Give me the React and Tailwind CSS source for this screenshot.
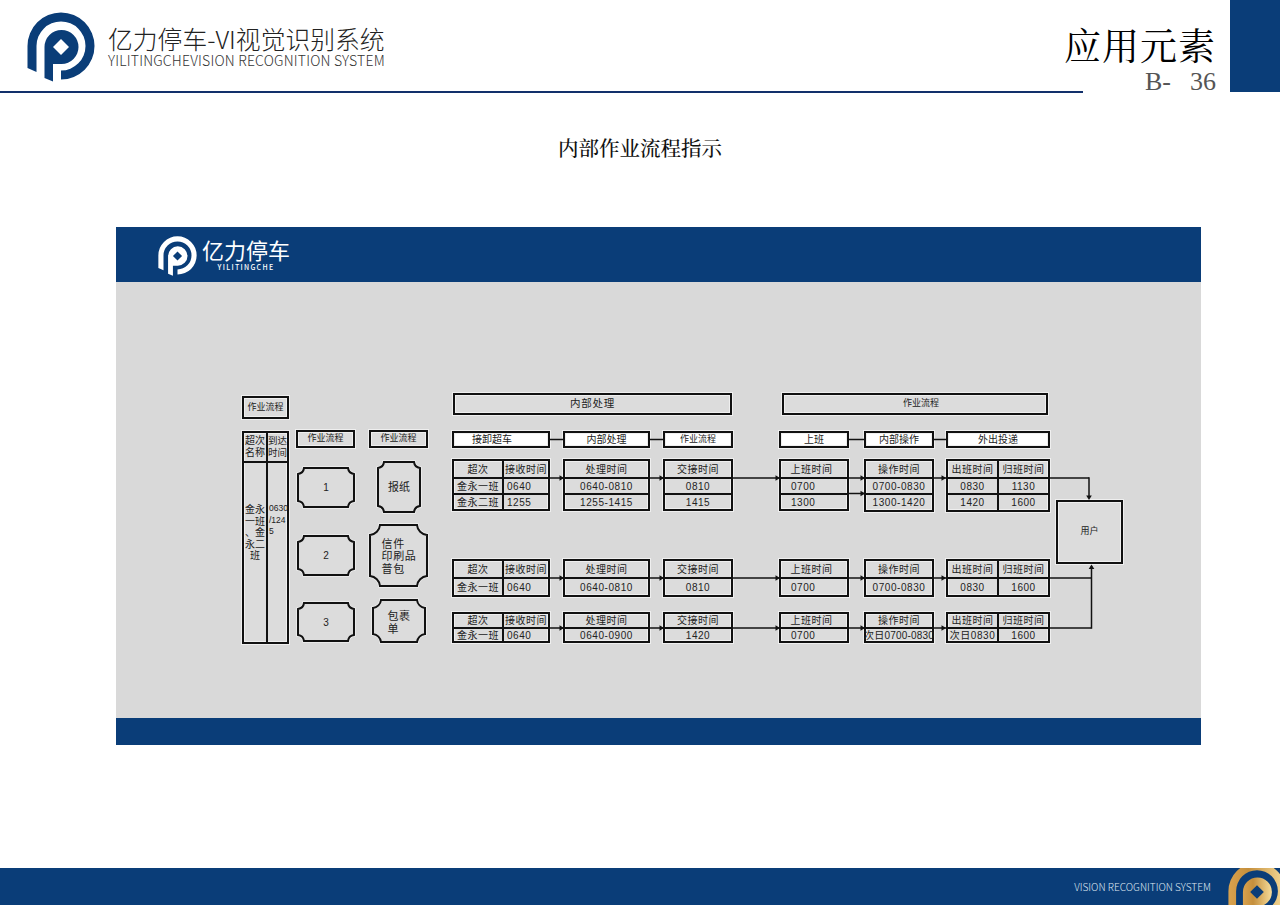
import React from "react";

const CJK = "font-['Noto_Sans_CJK_SC','Noto_Sans',sans-serif]";
const SERIF = "font-['Noto_Serif_CJK_SC','Noto_Sans_CJK_SC',serif]";
const DIA = "font-['Liberation_Sans','Noto_Sans_CJK_SC',sans-serif]";
const FRAME = "box-border border-2 border-[#111] shadow-[0_0_0_1px_#efefef,inset_0_0_0_1px_#efefef]";
const TRACKS = "grid items-start grid-cols-[98px_13px_87px_13px_70px_46px_70px_15px_70px_12px_104px]";
const STARTS = ["col-start-1", "col-start-3", "col-start-5", "col-start-7", "col-start-9", "col-start-11"];

const A = "w-[98px] grid-cols-[48px_46px]";
const B = "w-[87px] grid-cols-[83px]";
const C = "w-[70px] grid-cols-[66px]";
const D = "w-[104px] grid-cols-[49px_51px]";
const R1 = "grid-rows-[16px_16px_16px]";
const R1B = "grid-rows-[16px_16px_17px]";
const R2 = "grid-rows-[16px_18px]";
const R3 = "grid-rows-[13px_14px]";
const INSET_A = "pl-[3px] justify-start";
const INSET_S = "pl-[10px] justify-start";

function Logo({ fg = "#0a3d78", hole = "#fff", className, children }) {
  return (
    <svg viewBox="0 0 68 70" className={className}>
      {children}
      <path fill={fg} d="M0.5 56 L0.5 34 A33.5 33.5 0 1 1 34 67.5 L34 58.5 A24.5 24.5 0 1 0 9.5 34 L9.5 60 Z" />
      <path fill={fg} d="M17.5 66 L17.5 35 A17 17 0 1 1 34.5 52 L26 52 L26 69.5 Z" />
      <path fill={hole} d="M34 27 L42 35 L34 43 L26 35 Z" />
    </svg>
  );
}

function Box({ white, children, cls = "" }) {
  return (
    <div className={`${FRAME} flex items-center justify-center text-[#222] whitespace-nowrap ${white ? "bg-white" : "bg-[#dcdcdc]"} ${cls}`}>
      {children}
    </div>
  );
}

function Table({ cls, rows, insetCol = -1, inset = "", headCls = "" }) {
  return (
    <div className={`${FRAME} grid bg-[#dcdcdc] text-[10px] tracking-[0.55px] text-[#222] ${cls}`}>
      {rows.flatMap((r, i) =>
        r.map((c, j) => (
          <div
            key={i + "-" + j}
            className={`flex items-center whitespace-nowrap ${i && j === insetCol ? inset : "justify-center"} ${i === 0 ? headCls : ""} ${i ? "border-t-2 border-[#111]" : ""} ${j ? "border-l-2 border-[#111]" : ""}`}
          >
            {c}
          </div>
        ))
      )}
    </div>
  );
}

function Notch({ w, h, r = 7, size, children, cls = "" }) {
  const d = `M${r} 1 H${w - r} A${r} ${r} 0 0 0 ${w - 1} ${r} V${h - r} A${r} ${r} 0 0 0 ${w - r} ${h - 1} H${r} A${r} ${r} 0 0 0 1 ${h - r} V${r} A${r} ${r} 0 0 0 ${r} 1 Z`;
  return (
    <div className={`relative flex items-center justify-center text-[#222] ${size}`}>
      <svg className="absolute inset-0 overflow-visible" width={w} height={h}>
        <path d={d} fill="#dcdcdc" stroke="#efefef" strokeWidth="3.5" />
        <path d={d} fill="#dcdcdc" stroke="#111" strokeWidth="2" />
      </svg>
      <div className={`relative ${cls}`}>{children}</div>
    </div>
  );
}

function Row({ cls = "", children }) {
  return (
    <div className={`${TRACKS} ${cls}`}>
      {React.Children.map(children, (c, i) => (
        <div className={STARTS[i]}>{c}</div>
      ))}
    </div>
  );
}

function Connectors() {
  const L = (x1, y1, x2, y2) => <line x1={x1} y1={y1} x2={x2} y2={y2} stroke="#111" strokeWidth="1.5" />;
  const Ar = (x, y) => <path d={`M${x} ${y} l-4.5 -2.8 v5.6 Z`} fill="#111" />;
  const Dn = (x, y) => <path d={`M${x} ${y} l-2.8 -4.5 h5.6 Z`} fill="#111" />;
  const Up = (x, y) => <path d={`M${x} ${y} l-2.8 4.5 h5.6 Z`} fill="#111" />;
  return (
    <svg className="absolute inset-0 pointer-events-none" width="1085" height="436" viewBox="116 282 1085 436">
      {L(550, 439.5, 563, 439.5)}
      {L(650, 439.5, 663, 439.5)}
      {L(849, 439.5, 864, 439.5)}
      {L(934, 439.5, 946, 439.5)}
      {L(550, 478, 1089, 478)}
      {L(1089, 477.3, 1089, 498)}
      {Dn(1089, 500)}
      {L(849, 493.5, 864, 493.5)}
      {L(550, 578, 1091.5, 578)}
      {L(550, 628, 1091.5, 628)}
      {L(1091.5, 628.7, 1091.5, 566)}
      {Up(1091.5, 564.5)}
      {[564, 664, 780, 865, 946].map((x) => (
        <g key={x}>
          {Ar(x, 478)}
          {Ar(x, 578)}
          {Ar(x, 628)}
        </g>
      ))}
      {Ar(865, 493.5)}
    </svg>
  );
}

function Diagram() {
  return (
    <div className={`relative flex-1 flex items-start bg-[#d9d9d9] pl-[126px] pt-[111px] ${DIA}`}>
      {/* first column */}
      <div className="w-[47px] mt-[3px] flex flex-col gap-[12px]">
        <Box cls="w-[47px] h-[23px] text-[9px]">作业流程</Box>
        <div className={`${FRAME} h-[213px] grid grid-cols-[22px_21px] grid-rows-[30px_1fr] bg-[#dcdcdc] text-[10px] text-[#222]`}>
          <div className="flex items-center justify-center text-center leading-[12px] border-b-2 border-[#111]">超次<br />名称</div>
          <div className="flex items-center justify-center text-center text-[9.5px] leading-[12px] border-b-2 border-l-2 border-[#111]">到达<br />时间</div>
          <div className="pt-[41px] text-center leading-[11.5px]">金永<br />一班<br />、金<br />永二<br />班</div>
          <div className="border-l-2 border-[#111] pt-[40px] pl-[1px] text-[8.5px] leading-[11.5px]">0630<br />/124<br />5</div>
        </div>
      </div>

      {/* second column */}
      <div className="ml-[7px] mt-[37px] flex flex-col items-start">
        <Box cls="w-[59px] h-[18px] text-[9px]">作业流程</Box>
        <Notch w={58} h={41} size="w-[58px] h-[41px] ml-[1px] mt-[19px]" cls="text-[10px]">1</Notch>
        <Notch w={58} h={41} size="w-[58px] h-[41px] ml-[1px] mt-[27px]" cls="text-[10px]">2</Notch>
        <Notch w={58} h={40} size="w-[58px] h-[40px] ml-[1px] mt-[26px]" cls="text-[10px]">3</Notch>
      </div>

      {/* third column */}
      <div className="ml-[14px] mt-[37px] flex flex-col items-start">
        <Box cls="w-[59px] h-[18px] text-[9px]">作业流程</Box>
        <Notch w={44} h={52} size="w-[44px] h-[52px] ml-[8px] mt-[13px]" cls="text-[11px]">报纸</Notch>
        <Notch w={59} h={63} r={11} size="w-[59px] h-[63px] mt-[11px]" cls="text-[11px] leading-[12.5px] tracking-[0.6px] pl-[1px] pt-[2px]">信件<br />印刷品<br />普包</Notch>
        <Notch w={54} h={44} r={9} size="w-[54px] h-[44px] ml-[3px] mt-[12px]" cls="text-[11px] leading-[13px] tracking-[0.5px] pt-[3px]">包裹<br />单</Notch>
      </div>

      {/* process rows */}
      <div className="ml-[24px] w-[598px] flex flex-col">
        <div className="flex gap-[50px] pl-[1px]">
          <Box cls="w-[279px] h-[22px] text-[10.5px] tracking-[0.7px]">内部处理</Box>
          <Box cls="w-[266px] h-[22px] text-[9px] pl-[12px]">作业流程</Box>
        </div>

        <Row cls="mt-[16px]">
          <Box white cls="w-[98px] h-[17px] text-[10px] pr-[18px]">接卸超车</Box>
          <Box white cls="w-[87px] h-[17px] text-[10px]">内部处理</Box>
          <Box white cls="w-[70px] h-[17px] text-[9px]">作业流程</Box>
          <Box white cls="w-[70px] h-[17px] text-[10px]">上班</Box>
          <Box white cls="w-[70px] h-[17px] text-[10px]">内部操作</Box>
          <Box white cls="w-[104px] h-[17px] text-[10px]">外出投递</Box>
        </Row>

        <Row cls="mt-[11px]">
          <Table cls={`${A} ${R1}`} insetCol={1} inset={INSET_A} rows={[["超次", "接收时间"], ["金永一班", "0640"], ["金永二班", "1255"]]} />
          <Table cls={`${B} ${R1}`} rows={[["处理时间"], ["0640-0810"], ["1255-1415"]]} />
          <Table cls={`${C} ${R1}`} rows={[["交接时间"], ["0810"], ["1415"]]} />
          <Table cls={`${C} ${R1}`} insetCol={0} inset={INSET_S} headCls="pr-[5px]" rows={[["上班时间"], ["0700"], ["1300"]]} />
          <Table cls={`${C} ${R1B}`} rows={[["操作时间"], ["0700-0830"], ["1300-1420"]]} />
          <Table cls={`${D} ${R1B}`} rows={[["出班时间", "归班时间"], ["0830", "1130"], ["1420", "1600"]]} />
        </Row>

        <Row cls="mt-[47px]">
          <Table cls={`${A} ${R2}`} insetCol={1} inset={INSET_A} rows={[["超次", "接收时间"], ["金永一班", "0640"]]} />
          <Table cls={`${B} ${R2}`} rows={[["处理时间"], ["0640-0810"]]} />
          <Table cls={`${C} ${R2}`} rows={[["交接时间"], ["0810"]]} />
          <Table cls={`${C} ${R2}`} insetCol={0} inset={INSET_S} headCls="pr-[5px]" rows={[["上班时间"], ["0700"]]} />
          <Table cls={`${C} ${R2}`} rows={[["操作时间"], ["0700-0830"]]} />
          <Table cls={`${D} ${R2}`} rows={[["出班时间", "归班时间"], ["0830", "1600"]]} />
        </Row>

        <Row cls="mt-[15px]">
          <Table cls={`${A} ${R3}`} insetCol={1} inset={INSET_A} rows={[["超次", "接收时间"], ["金永一班", "0640"]]} />
          <Table cls={`${B} ${R3}`} rows={[["处理时间"], ["0640-0900"]]} />
          <Table cls={`${C} ${R3}`} rows={[["交接时间"], ["1420"]]} />
          <Table cls={`${C} ${R3}`} insetCol={0} inset={INSET_S} headCls="pr-[5px]" rows={[["上班时间"], ["0700"]]} />
          <Table cls={`${C} ${R3}`} rows={[["操作时间"], [<span className="tracking-[0.2px]">次日0700-0830</span>]]} />
          <Table cls={`${D} ${R3}`} rows={[["出班时间", "归班时间"], ["次日0830", "1600"]]} />
        </Row>
      </div>

      <Box cls="ml-[6px] mt-[107px] w-[67px] h-[64px] text-[9px]">用户</Box>
      <Connectors />
    </div>
  );
}

export default function App() {
  return (
    <div className={`flex flex-col w-[1280px] h-[905px] bg-white overflow-hidden ${CJK}`}>
      <header className="flex h-[93px] shrink-0">
        <div className="w-[1083px] shrink-0 flex flex-col">
          <div className="flex-1 flex items-start pl-[26.5px] pt-[11.5px]">
            <Logo className="w-[68px] h-[70px]" />
            <div className="ml-[13.5px] pt-[12px]">
              <div className="text-[24.8px] leading-[28px] text-[#222] font-light whitespace-nowrap">亿力停车-VI视觉识别系统</div>
              <div className="mt-[0.5px] text-[14px] font-light leading-[16px] tracking-[0.2px] text-[#333] whitespace-nowrap">YILITINGCHEVISION RECOGNITION SYSTEM</div>
            </div>
          </div>
          <div className="h-[2px] bg-[#12306b]" />
        </div>
        <div className="w-[147px] shrink-0 flex flex-col items-end pr-[14px] pt-[19px]">
          <div className={`${SERIF} text-[37px] leading-[50px] tracking-[1px] text-black whitespace-nowrap`}>应用元素</div>
          <div className="-mt-[2px] text-[26px] leading-[30px] font-['Liberation_Serif',serif] text-[#555] whitespace-pre [word-spacing:3px]">B-  36</div>
        </div>
        <div className="w-[50px] h-[92px] bg-[#0a3d78]" />
      </header>

      <div className="h-[134px] shrink-0 flex justify-center pt-[40px]">
        <div className={`${SERIF} text-[20.5px] leading-[28px] font-medium text-[#111]`}>内部作业流程指示</div>
      </div>

      <main className="ml-[116px] w-[1085px] h-[518px] flex flex-col shrink-0">
        <div className="h-[55px] bg-[#0a3d78] flex items-start pl-[42px] pt-[9px]">
          <Logo fg="#fff" hole="#0a3d78" className="w-[39px] h-[40px]" />
          <div className="ml-[5px] text-white text-center">
            <div className="text-[22px] leading-[27px] whitespace-nowrap">亿力停车</div>
            <div className="text-[7px] leading-[8px] tracking-[1.3px] font-medium">YILITINGCHE</div>
          </div>
        </div>
        <Diagram />
        <div className="h-[27px] bg-[#0a3d78]" />
      </main>

      <div className="flex-1" />
      <footer className="relative h-[37px] shrink-0 bg-[#0a3d78] flex items-center justify-end pr-[69px] overflow-hidden">
        <span className="text-[10.1px] font-light text-[#dfe6f0] whitespace-nowrap">VISION RECOGNITION SYSTEM</span>
        <Logo fg="url(#gold)" hole="#0a3d78" className="absolute left-[1228px] -top-[6px] w-[58px] h-[60px]">
          <defs>
            <linearGradient id="gold" x1="0" y1="0" x2="1" y2="0">
              <stop offset="0" stopColor="#d9a24e" />
              <stop offset="0.35" stopColor="#c58f3c" />
              <stop offset="1" stopColor="#f6dc9a" />
            </linearGradient>
          </defs>
        </Logo>
      </footer>
    </div>
  );
}
